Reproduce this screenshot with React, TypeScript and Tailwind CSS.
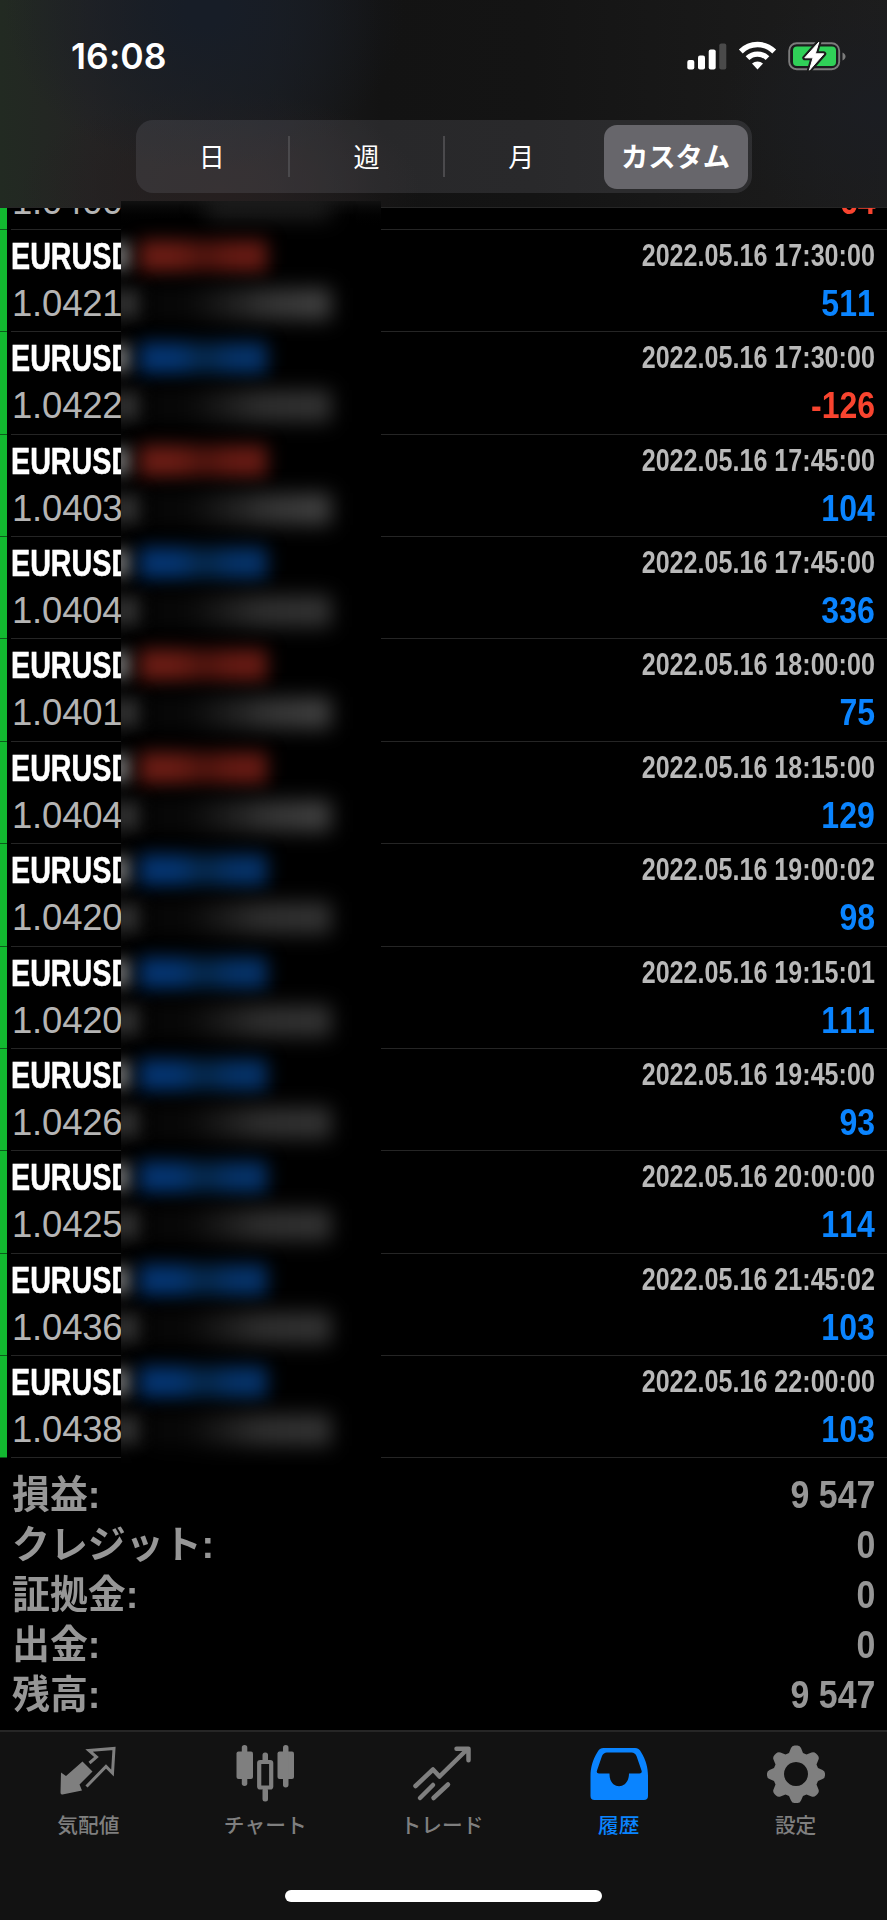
import React from 'react';

type Side = 'sell' | 'buy';

interface Deal {
    price: string;
    side: Side;
    time: string;
    profit: number;
}

const DEALS: Deal[] = [
    { price: '1.0421', side: 'sell', time: '2022.05.16 17:30:00', profit: 511 },
    { price: '1.0422', side: 'buy', time: '2022.05.16 17:30:00', profit: -126 },
    { price: '1.0403', side: 'sell', time: '2022.05.16 17:45:00', profit: 104 },
    { price: '1.0404', side: 'buy', time: '2022.05.16 17:45:00', profit: 336 },
    { price: '1.0401', side: 'sell', time: '2022.05.16 18:00:00', profit: 75 },
    { price: '1.0404', side: 'sell', time: '2022.05.16 18:15:00', profit: 129 },
    { price: '1.0420', side: 'buy', time: '2022.05.16 19:00:02', profit: 98 },
    { price: '1.0420', side: 'buy', time: '2022.05.16 19:15:01', profit: 111 },
    { price: '1.0426', side: 'buy', time: '2022.05.16 19:45:00', profit: 93 },
    { price: '1.0425', side: 'buy', time: '2022.05.16 20:00:00', profit: 114 },
    { price: '1.0436', side: 'buy', time: '2022.05.16 21:45:02', profit: 103 },
    { price: '1.0438', side: 'buy', time: '2022.05.16 22:00:00', profit: 103 },
];

const SUMMARY = [
    { label: '損益:', value: '9 547' },
    { label: 'クレジット:', value: '0' },
    { label: '証拠金:', value: '0' },
    { label: '出金:', value: '0' },
    { label: '残高:', value: '9 547' },
];

const StatusBar = () => (
    <div className="flex h-[120px] items-start justify-between pt-[36px] pr-[41px] pl-[71px]">
        <span className="font-['Inter'] text-[35.5px] leading-[41px] font-semibold tracking-[0.1px] text-white">16:08</span>
        <svg className="mt-[4px]" width="160" height="32" viewBox="0 0 160 32" fill="none">
            <rect x="1.300" y="20" width="7" height="9.500" rx="2" fill="#fff" />
            <rect x="12" y="15.500" width="7" height="14" rx="2" fill="#fff" />
            <rect x="22.700" y="9.500" width="7" height="20" rx="2" fill="#fff" />
            <rect x="33.300" y="3.500" width="7" height="26" rx="2" fill="#4a4a4a" />
            <path d="M54.800 11.500a23.500 23.500 0 0 1 33.400 0" stroke="#fff" strokeWidth="5.400" />
            <path d="M61.500 18.200a14.200 14.200 0 0 1 20 0" stroke="#fff" strokeWidth="5.200" />
            <path d="M66 23.600a8.200 8.200 0 0 1 11 0L71.500 29.400z" fill="#fff" />
            <rect x="103.200" y="3.200" width="50" height="26" rx="7.500" stroke="#7c7c7c" strokeWidth="1.900" />
            <path d="M156.500 12.500c4 1.500 4 6.500 0 8z" fill="#7c7c7c" />
            <rect x="107" y="6.500" width="43" height="19.500" rx="4" fill="#30d158" />
            <path d="M132.800 2.200l-14 15.600h8.300l-3.700 12.400 14.400-16.400h-8.500z" fill="#fff" stroke="#1b1c1c" strokeWidth="5" strokeLinejoin="round" />
            <path d="M132.800 2.200l-14 15.600h8.300l-3.700 12.400 14.400-16.400h-8.500z" fill="#fff" stroke="#fff" strokeWidth="1" strokeLinejoin="round" />
        </svg>
    </div>
);

const PeriodTabs = () => (
    <div className="mx-auto flex h-[73px] w-[616px] items-center rounded-[17px] bg-[#76768038] font-['Noto_Sans_CJK_JP',sans-serif] text-[26px] text-white">
        <div className="flex flex-1 justify-center pb-[2px] font-normal">日</div>
        <div className="h-[41px] w-[2px] bg-[#4b4a4d]" />
        <div className="flex flex-1 justify-center pb-[2px] font-normal">週</div>
        <div className="h-[41px] w-[2px] bg-[#4b4a4d]" />
        <div className="flex flex-1 justify-center pb-[2px] font-normal">月</div>
        <div className="mr-[4px] ml-[6px] flex h-[64px] w-[144px] items-center justify-center rounded-[13px] bg-[#67666b] pb-[2px] text-[27.3px] font-bold">カスタム</div>
    </div>
);

const DealRow = ({ deal }: { deal: Deal }) => (
    <div className="flex h-[102.37px] shrink-0">
        <div className="w-[7px] border-b border-[#0b5a1a] bg-[#12b830]" />
        <div className="ml-[4px] flex flex-1 justify-between border-b border-[#252525] pr-[12px]">
            <div className="flex flex-col pt-[4px]">
                <span className="origin-left scale-x-[0.765] text-[37.5px] leading-[44px] font-bold text-white [-webkit-text-stroke:0.6px_#fff]">EURUSD</span>
                <span className="pl-[1px] text-[36.5px] leading-[52px] tracking-[-0.2px] text-[#b4b4b4]">{deal.price}</span>
            </div>
            <div className="flex flex-col items-end pt-[4px]">
                <span className="origin-right scale-x-[0.81] text-[31px] leading-[44px] font-bold whitespace-nowrap text-[#b9b9b9]">{deal.time}</span>
                <span className={`origin-right scale-x-[0.865] text-[37px] leading-[52px] font-bold ${deal.profit < 0 ? 'text-[#f8442f]' : 'text-[#0a84ff]'}`}>
                    {deal.profit}
                </span>
            </div>
        </div>
    </div>
);

// Frosted strip that hides the trade volumes and close prices
const PrivacyStrip = () => (
    <div className="absolute top-[201px] left-[121px] h-[1264px] w-[260px] overflow-hidden bg-black">
        <div className="flex h-[29px] items-start bg-linear-to-b from-[#111] to-black">
            <div className="ml-[85px] h-[16px] w-[125px] bg-[#262626] blur-[11px]" />
        </div>
        {DEALS.map((deal, i) => (
            <div key={i} className="flex h-[102.37px] flex-col">
                <div className="flex h-[52px] items-center">
                    <div className="-ml-[10px] h-[26px] w-[19px] bg-[#777] blur-[8px]" />
                    <div
                        className={`ml-[9px] h-[32px] w-[128px] blur-[9px] ${
                            deal.side === 'sell'
                                ? 'bg-linear-to-r from-[#6a1c14] from-30% via-[#4c130d] via-50% to-[#661a13] to-75%'
                                : 'bg-linear-to-r from-[#043470] from-30% via-[#052647] via-50% to-[#053268] to-75%'
                        }`}
                    />
                </div>
                <div className="flex h-[44px] items-center">
                    <div className="-ml-[10px] h-[28px] w-[30px] bg-[#333] blur-[9px]" />
                    <div
                        className={`ml-[8px] h-[32px] w-[182px] bg-linear-to-r blur-[10px] ${
                            deal.side === 'sell' ? 'from-[#080808] from-20% via-[#343434] via-65% to-[#424242]' : 'from-[#080808] from-20% via-[#2e2e2e] via-60% to-[#343434]'
                        }`}
                    />
                </div>
            </div>
        ))}
    </div>
);

const Summary = () => (
    <div className="flex flex-col pt-[12px] pr-[12px] pl-[12px]">
        {SUMMARY.map((item) => (
            <div key={item.label} className="flex h-[50px] items-center justify-between font-bold text-[#969696]">
                <span className="origin-left scale-x-[0.985] font-['Liberation_Sans','Noto_Sans_CJK_JP',sans-serif] text-[38.5px] leading-[50px]">{item.label}</span>
                <span className="origin-right scale-x-[0.88] text-[38.5px] leading-[50px]">{item.value}</span>
            </div>
        ))}
    </div>
);

const QuotesIcon = () => (
    <svg width="60" height="60" viewBox="0 0 60 60" fill="none">
        <path d="M24.500 16.500L34.500 26.500L21.500 39.500L24 45.500L4.500 49.500Q2.500 50 2.500 47.500L3 27.500L8 31Z" fill="#7f7f7f" />
        <path d="M31.500 18L38.500 12L31 5.500L56 3.500L54.500 28L48 21.500L28.500 41.500" stroke="#7f7f7f" strokeWidth="3" />
    </svg>
);

const ChartIcon = () => (
    <svg width="60" height="60" viewBox="0 0 60 60" fill="#7f7f7f">
        <rect x="1.500" y="6.500" width="16.500" height="27.500" rx="2" />
        <rect x="6.800" y="0" width="5.500" height="41" rx="2.700" />
        <rect x="42.500" y="6.500" width="16.500" height="27.500" rx="2" />
        <rect x="48" y="0" width="5.500" height="42.500" rx="2.700" />
        <rect x="24.200" y="17" width="12" height="25.500" rx="1" fill="none" stroke="#7f7f7f" strokeWidth="4.200" />
        <rect x="27.500" y="7.500" width="5.500" height="10" rx="2.500" />
        <rect x="27.500" y="43" width="5.500" height="13.500" rx="2.500" />
    </svg>
);

const TradeIcon = () => (
    <svg width="60" height="60" viewBox="0 0 60 60" fill="none" stroke="#7f7f7f" strokeWidth="4.500" strokeLinecap="round" strokeLinejoin="round">
        <path d="M3.500 41L21 24.500L27.500 31.500L55 4.500M44.500 3.800h12v11.500" />
        <path d="M8 53L21 40M21.500 53L36 39.500" />
    </svg>
);

const HistoryIcon = () => (
    <svg width="60" height="60" viewBox="0 0 60 60">
        <path
            d="M14.500 3h31.500q4 0 6 4c5 8 7 16 7 24v20q0 4-4 4H5.500q-4 0-4-4V31c0-8 2-16 7-24q2-4 6-4zM18 7.500q-3.500 0-5 3.500l-5 14.500q-1 3 2 3h10.500c-.5 17 19.500 17 19.500 0h10.500q3 0 2-3l-5-14.500q-1.500-3.500-5-3.500z"
            fill="#0a84ff"
            fillRule="evenodd"
        />
    </svg>
);

const SettingsIcon = () => (
    <svg width="60" height="60" viewBox="0 0 60 60">
        <path
            d="M25 3q1-2.500 3.500-2.500h3q2.500 0 3.500 2.500l2 5 3.500 1.500 5-2q2.500-1 4.500 1l1.500 1.500q2 2 1 4.500l-2 5 1.500 3.500 4.500 2q2.500 1 2.500 3.500v2q0 2.500-2.500 3.500l-4.500 2-1.500 3.500 2 5q1 2.500-1 4.500l-1.500 1.500q-2 2-4.500 1l-5-2-3.500 1.500-2 4.500q-1 2.500-3.500 2.500h-3q-2.500 0-3.500-2.500l-2-4.500-3.500-1.500-5 2q-2.500 1-4.500-1l-1.500-1.500q-2-2-1-4.500l2-5-1.500-3.500-4.500-2q-2.500-1-2.500-3.500v-2q0-2.500 2.500-3.500l4.500-2 1.500-3.500-2-5q-1-2.500 1-4.500l1.500-1.500q2-2 4.500-1l5 2 3.500-1.500zM30 17a12 12 0 1 0 .01 0z"
            fill="#7f7f7f"
            fillRule="evenodd"
        />
    </svg>
);

const TABS = [
    { label: '気配値', Icon: QuotesIcon },
    { label: 'チャート', Icon: ChartIcon },
    { label: 'トレード', Icon: TradeIcon },
    { label: '履歴', Icon: HistoryIcon, active: true },
    { label: '設定', Icon: SettingsIcon },
];

const TabBar = () => (
    <div className="flex h-[190px] shrink-0 flex-col items-center justify-between border-t-2 border-[#262626] bg-[#121212] pb-[18px]">
        <div className="grid w-full grid-cols-5 pt-[13px] pr-[3px]">
            {TABS.map(({ label, Icon, active }) => (
                <div key={label} className="flex flex-col items-center">
                    <Icon />
                    <span className={`mt-[4px] font-['Noto_Sans_CJK_JP',sans-serif] text-[20.7px] leading-[30px] font-medium ${active ? 'text-[#0a84ff]' : 'text-[#7f7f7f]'}`}>{label}</span>
                </div>
            ))}
        </div>
        <div className="h-[12px] w-[317px] rounded-full bg-white" />
    </div>
);

export default function App() {
    return (
        <div className="relative flex h-[1920px] w-[887px] flex-col overflow-hidden bg-black font-['Liberation_Sans',sans-serif] [font-kerning:none]">
            <header className="h-[208px] shrink-0 border-b border-[#262626] bg-[radial-gradient(ellipse_200px_160px_at_205px_10px,#171d27_10%,transparent),radial-gradient(ellipse_200px_100px_at_220px_190px,#261f1f,transparent),radial-gradient(ellipse_160px_120px_at_880px_110px,#1b1d22,transparent),linear-gradient(90deg,#222a22,#242424_10%,#1b1c1e_30%,#131313_43%,#141414_60%,#1d1d1d)]">
                <StatusBar />
                <PeriodTabs />
            </header>
            <div className="flex h-[22px] shrink-0 overflow-hidden">
                <div className="w-[7px] border-b border-[#0b5a1a] bg-[#12b830]" />
                <div className="ml-[4px] flex flex-1 items-end justify-between border-b border-[#252525] pr-[12px] pb-px pl-[1px]">
                    <span className="text-[36.5px] leading-[52px] tracking-[-0.2px] text-[#b4b4b4]">1.0400</span>
                    <span className="origin-right scale-x-[0.865] text-[37px] leading-[52px] font-bold text-[#f8442f]">-64</span>
                </div>
            </div>
            {DEALS.map((deal, i) => (
                <DealRow key={i} deal={deal} />
            ))}
            <PrivacyStrip />
            <Summary />
            <div className="flex-1" />
            <TabBar />
        </div>
    );
}
